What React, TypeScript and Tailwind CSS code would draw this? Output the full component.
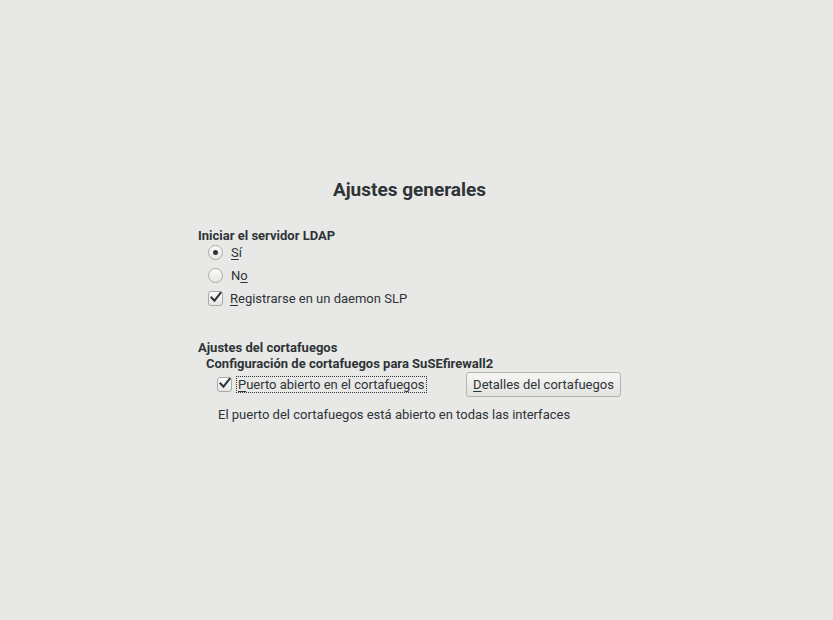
import React from "react";

function Radio({ checked }: { checked?: boolean }) {
  return (
    <span className="flex h-[15px] w-[15px] items-center justify-center rounded-full border border-[#a9a9a6] bg-gradient-to-b from-[#fbfbfa] to-[#e6e6e4]">
      {checked && <span className="h-[5px] w-[5px] rounded-full bg-[#2e3436]" />}
    </span>
  );
}

function Check() {
  return (
    <span className="flex h-[15px] w-[15px] items-center justify-center rounded-[3px] border border-[#a9a9a6] bg-gradient-to-b from-[#fbfbfa] to-[#e6e6e4]">
      <svg width="13" height="13" viewBox="0 0 13 13" className="-mt-[2px] ml-[1px]">
        <path d="M1.5 6.5 L4.8 10 L11.5 1.5" fill="none" stroke="#2e3436" strokeWidth="2.2" strokeLinecap="square" />
      </svg>
    </span>
  );
}

function Key({ children }: { children: React.ReactNode }) {
  return <u className="underline decoration-1 underline-offset-[2px]">{children}</u>;
}

export default function App() {
  return (
    <div
      className="h-[620px] w-full bg-[#e8e8e7] pt-[179px] text-[13px] text-[#2e3436]"
      style={{ fontFamily: "Roboto, 'Liberation Sans', sans-serif" }}
    >
      <div className="ml-[198px] w-[423px]">
        <h1 className="text-center text-[19px] font-bold leading-[22px]">Ajustes generales</h1>

        <div className="mt-[27px] font-bold leading-[16px]">Iniciar el servidor LDAP</div>
        <div className="-mt-[3px] ml-[10px] flex flex-col">
          <label className="flex h-[23px] items-center gap-[8px]">
            <Radio checked />
            <span><Key>S</Key>í</span>
          </label>
          <label className="flex h-[23px] items-center gap-[8px]">
            <Radio />
            <span>N<Key>o</Key></span>
          </label>
          <label className="flex h-[23px] items-center gap-[7px]">
            <Check />
            <span><Key>R</Key>egistrarse en un daemon SLP</span>
          </label>
        </div>

        <div className="mt-[30px] font-bold leading-[16px]">Ajustes del cortafuegos</div>
        <div className="ml-[8px] font-bold leading-[16px]">Configuración de cortafuegos para SuSEfirewall2</div>
        <div className="flex h-[25px] items-center">
          <span className="ml-[19px]">
            <Check />
          </span>
          <span className="ml-[4px] border border-dotted border-[#2e3436] px-[1px] leading-[15px]">
            <Key>P</Key>uerto abierto en el cortafuegos
          </span>
          <button
            type="button"
            className="ml-auto h-[25px] w-[155px] rounded-[3px] border border-[#b3b3b0] bg-gradient-to-b from-[#f6f6f5] to-[#e2e2e0] leading-[23px] text-[#2e3436]"
          >
            <Key>D</Key>etalles del cortafuegos
          </button>
        </div>
        <div className="ml-[20px] mt-[10px] leading-[16px]">
          El puerto del cortafuegos está abierto en todas las interfaces
        </div>
      </div>
    </div>
  );
}
